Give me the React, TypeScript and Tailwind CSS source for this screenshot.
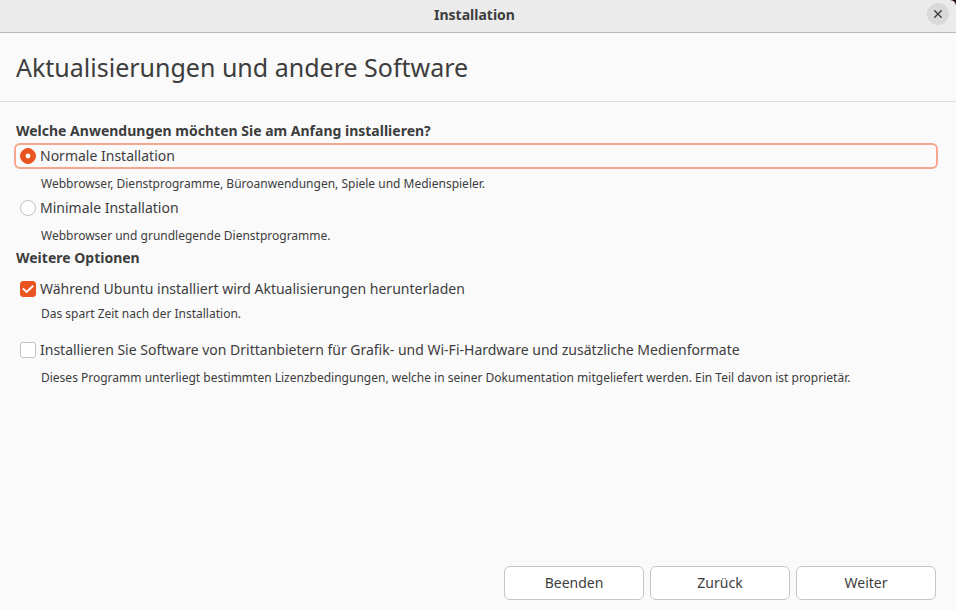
import { useState } from "react";

const focusBox = "border-[#f4a78e]";
const plainBox = "border-transparent";

interface OptionProps {
  id: string;
  type: "radio" | "checkbox";
  label: string;
  hint: string;
  checked: boolean;
  focused?: boolean;
  gap: string;
  onChange: () => void;
}

function Option({ id, type, label, hint, checked, focused, gap, onChange }: OptionProps) {
  const shape = type === "radio" ? "rounded-full" : "rounded-[3px]";
  const fill = checked ? "border-[#e95420] bg-[#e95420]" : "border-[#c2c2c2] bg-white";
  return (
    <div>
      <div className={`-mx-0.5 flex h-[26px] items-center gap-1 rounded-md border-2 pl-1 ${focused ? focusBox : plainBox}`}>
        <span className="relative size-4 shrink-0">
          <input
            id={id}
            type={type}
            name={type === "radio" ? "apps" : id}
            checked={checked}
            onChange={onChange}
            aria-describedby={`${id}-hint`}
            className={`block size-4 appearance-none border outline-none ${shape} ${fill}`}
          />
          {checked && (
            <svg viewBox="0 0 16 16" className="pointer-events-none absolute inset-0 size-4" aria-hidden="true">
              {type === "radio" ? (
                <circle cx="8" cy="8" r="2.4" fill="#fff" />
              ) : (
                <path d="M2.8 7.4 6.6 11 13.2 4.8" fill="none" stroke="#fff" strokeWidth="1.9" />
              )}
            </svg>
          )}
        </span>
        <label htmlFor={id} className="whitespace-nowrap">{label}</label>
      </div>
      <p id={`${id}-hint`} className={`pl-[25px] text-[12px] leading-4 whitespace-nowrap ${gap}`}>{hint}</p>
    </div>
  );
}

export default function App() {
  const [mode, setMode] = useState("normal");
  const [updates, setUpdates] = useState(true);
  const [thirdParty, setThirdParty] = useState(false);

  return (
    <div className="flex min-h-screen flex-col bg-[#fafafa] font-['Noto_Sans',sans-serif] text-[14px] leading-5 text-[#3d3d3d]">
      <div className="bg-[#300a24]">
        <header className="grid h-[33px] grid-cols-[1fr_auto_1fr] items-start rounded-tr-md border-b border-[#b8b8b8] bg-[#ebebeb] pt-[3px] pr-[7px]">
          <h1 className="col-start-2 pt-0.5 font-bold">Installation</h1>
          <button type="button" aria-label="Schließen" className="flex size-[22px] items-center justify-center justify-self-end rounded-full bg-[#d9d9d9]">
            <svg viewBox="0 0 8 8" className="size-2" aria-hidden="true">
              <path d="M0.3 0.3 7.7 7.7M7.7 0.3 0.3 7.7" stroke="#3d3d3d" strokeWidth="1.4" />
            </svg>
          </button>
        </header>
      </div>
      <div className="border-b border-[#dedede] px-4 py-4">
        <h2 className="text-[25px] leading-9">Aktualisierungen und andere Software</h2>
      </div>
      <main className="flex-1 pt-[19px] pr-5 pl-4">
        <form>
          <fieldset className="flex flex-col gap-[3px]">
            <legend className="mb-0.5 font-bold">Welche Anwendungen möchten Sie am Anfang installieren?</legend>
            <Option id="normal" type="radio" label="Normale Installation" hint="Webbrowser, Dienstprogramme, Büroanwendungen, Spiele und Medienspieler." checked={mode === "normal"} focused={mode === "normal"} gap="mt-[7px]" onChange={() => setMode("normal")} />
            <Option id="minimal" type="radio" label="Minimale Installation" hint="Webbrowser und grundlegende Dienstprogramme." checked={mode === "minimal"} focused={mode === "minimal"} gap="mt-[7px]" onChange={() => setMode("minimal")} />
          </fieldset>
          <fieldset className="mt-1 flex flex-col gap-[15px]">
            <legend className="mb-2 font-bold">Weitere Optionen</legend>
            <Option id="updates" type="checkbox" label="Während Ubuntu installiert wird Aktualisierungen herunterladen" hint="Das spart Zeit nach der Installation." checked={updates} gap="mt-1" onChange={() => setUpdates(!updates)} />
            <Option id="thirdparty" type="checkbox" label="Installieren Sie Software von Drittanbietern für Grafik- und Wi-Fi-Hardware und zusätzliche Medienformate" hint="Dieses Programm unterliegt bestimmten Lizenzbedingungen, welche in seiner Dokumentation mitgeliefert werden. Ein Teil davon ist proprietär." checked={thirdParty} gap="mt-[7px]" onChange={() => setThirdParty(!thirdParty)} />
          </fieldset>
        </form>
      </main>
      <footer className="flex justify-end gap-1.5 pr-5 pb-2.5">
        {["Beenden", "Zurück", "Weiter"].map((label) => (
          <button key={label} type="button" className="h-[34px] w-[140px] rounded-md border border-[#c6c6c6] bg-white">
            {label}
          </button>
        ))}
      </footer>
    </div>
  );
}
